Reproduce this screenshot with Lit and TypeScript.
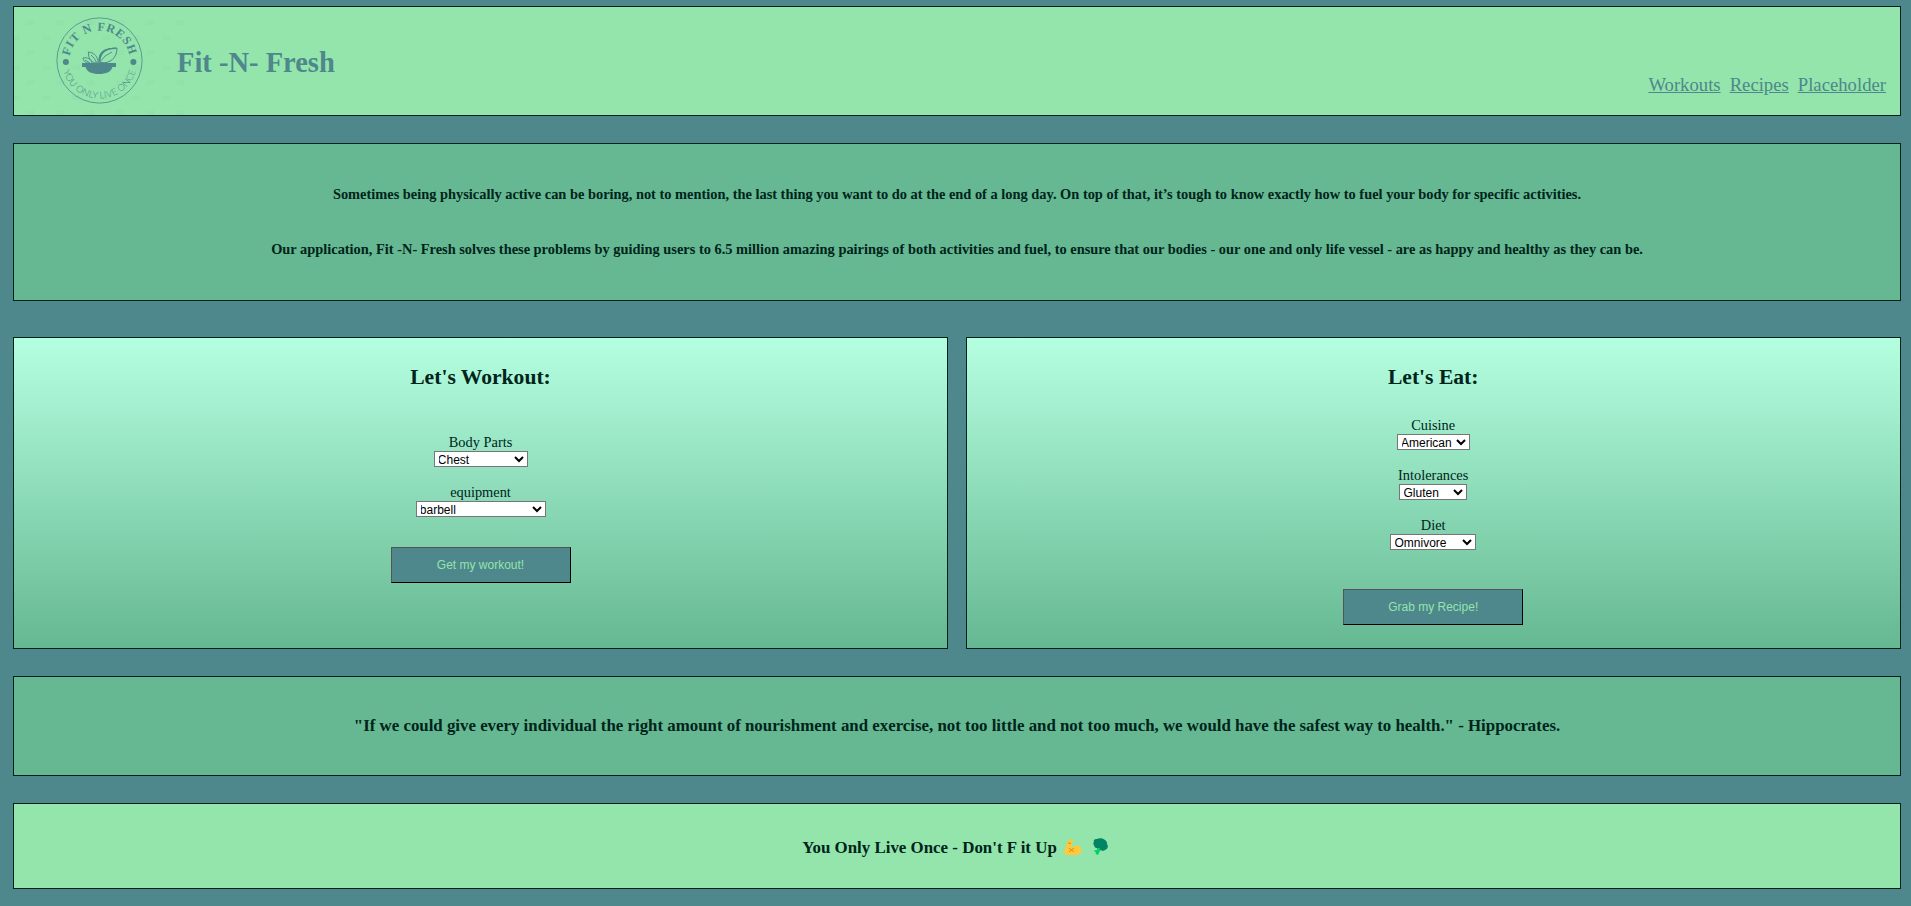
import { LitElement, html, css, svg } from "lit";
import { customElement, property } from "lit/decorators.js";

@customElement("brand-logo")
class BrandLogo extends LitElement {
  static styles = css`
    :host { display: block; width: 171px; height: 108px; }
    svg { display: block; }
    .top { font: bold 12px "Liberation Serif", serif; letter-spacing: 0.95px; }
    .bottom { font: 300 9.4px "Lato", "Open Sans", sans-serif; letter-spacing: 0.1px; }
    .mark { font: bold 7px "Liberation Sans", sans-serif; }
  `;
  render() {
    const marks = [];
    for (let r = 0; r < 7; r++) {
      for (let c = 0; c < 6; c++) {
        marks.push(svg`<text x=${(r % 2 ? -2 : 12) + c * 30} y=${18 + r * 15}>h8</text>`);
      }
    }
    return html`<svg width="171" height="108" viewBox="0 0 171 108" fill="#4e878c">
      <g class="mark" opacity="0.05">${marks}</g>
      <defs>
        <path id="arc-top" d="M55.300 53.800 A30.200 30.200 0 0 1 115.700 53.800" />
        <path id="arc-bottom" d="M47.700 53.600 A37.800 37.800 0 0 0 123.300 53.600" />
      </defs>
      <circle cx="85.5" cy="53.5" r="42.6" fill="none" stroke="#4e878c" stroke-width="0.8" />
      <text class="top"><textPath href="#arc-top" startOffset="50%" text-anchor="middle">FIT N FRESH</textPath></text>
      <text class="bottom"><textPath href="#arc-bottom" startOffset="50%" text-anchor="middle">YOU ONLY LIVE ONCE</textPath></text>
      <circle cx="51.9" cy="55" r="3" />
      <circle cx="119.4" cy="55" r="3" />
      <path d="M68 56H102V60H98.500C97 65 92 67 85 67S73 65 71.500 60H68Z" />
      <path d="M85 56C84 46 91 41 103 41C103 51 96 57 87 55.500Z" fill="none" stroke="#4e878c" stroke-width="1" />
      <path d="M85 55C83 45 91 40 103 41L101 42C92 42 87 46 86.500 54Z" />
      <path d="M86 55Q90 48 98 45M84 56C84 50 81 46 74.500 45C74 51 77 55 82 56M83 56Q80 50 77 48M78 56C77 52 74 50 69 51C69.500 54 71 56 75 56M76 56L71 53" fill="none" stroke="#4e878c" stroke-width="0.9" />
    </svg>`;
  }
}

@customElement("choice-field")
class ChoiceField extends LitElement {
  @property() label = "";
  @property() value = "";
  @property({ type: Number }) width = 90;
  static styles = css`
    :host { display: flex; flex-direction: column; align-items: center; height: 50px; }
    label { font: 14.4px/17px "Liberation Serif", serif; }
    select {
      box-sizing: border-box; height: 16px; margin: 0; padding: 0 0 1px; border: 1px solid #767676;
      border-radius: 0; background: #fff; color: #000; font: 12px "Liberation Sans", sans-serif;
      text-indent: -0.7px;
    }
  `;
  render() {
    return html`<label for="pick">${this.label}</label>
      <select id="pick" style="width:${this.width}px"><option>${this.value}</option></select>`;
  }
}

@customElement("app-root")
class AppRoot extends LitElement {
  static styles = css`
    :host {
      display: block; box-sizing: border-box; height: 906px; padding: 6px 10px 0 13px;
      background: #4e878c; color: #00241b; font-family: "Liberation Serif", serif; overflow: hidden;
    }
    header, section, footer, .card { box-sizing: border-box; border: 1px solid #00241b; }
    h1, h2, h3, p { margin: 0; }
    header { display: flex; height: 110px; background: #93e5ab; color: #4e878c; }
    h1 { font-size: 28.5px; line-height: 33px; margin: 39px 0 0 -8px; }
    nav { display: flex; gap: 9px; margin: 67px 14px 0 auto; font-size: 18.7px; line-height: 22px; }
    a { color: inherit; text-decoration: underline; }
    section { background: #65b891; text-align: center; font-weight: bold; }
    .intro { height: 158px; margin-top: 27px; padding-top: 42px; font-size: 14.405px; line-height: 17px; }
    .intro p + p { margin-top: 38px; }
    .cards { display: grid; grid-template-columns: 1fr 1fr; gap: 18px; margin: 36px 0 27px; }
    .card {
      display: flex; flex-direction: column; align-items: center; height: 312px; padding-top: 26px;
      background: linear-gradient(#b5ffe1, #65b891);
    }
    .meal { padding-right: 0.6px; }
    h2 { font-size: 21.6px; line-height: 26px; }
    .fields { margin-top: 27px; }
    .workout .fields { margin-top: 44px; }
    button {
      width: 180px; height: 36px; margin-top: 22px; padding: 0; border: 1px outset #000; border-radius: 0;
      background: #4e878c; color: #93e5ab; font: 12px "Liberation Sans", sans-serif;
    }
    .workout button { margin-top: 13px; }
    .quote { height: 100px; padding-top: 39px; font-size: 16.85px; line-height: 19px; }
    footer {
      display: flex; justify-content: center; height: 86px; margin-top: 27px; padding: 34px 3px 0 0;
      background: #93e5ab; font-size: 16.9px; line-height: 19px; font-weight: bold;
    }
    .arm { margin: 1px 0 0 7px; }
    .broccoli { margin: 0 0 0 11px; }
  `;
  render() {
    return html`
      <header>
        <brand-logo></brand-logo>
        <h1>Fit -N- Fresh</h1>
        <nav><a>Workouts</a><a>Recipes</a><a>Placeholder</a></nav>
      </header>
      <section class="intro">
        <p>Sometimes being physically active can be boring, not to mention, the last thing you want to do at the end of a long day. On top of that, it’s tough to know exactly how to fuel your body for specific activities.</p>
        <p>Our application, Fit -N- Fresh solves these problems by guiding users to 6.5 million amazing pairings of both activities and fuel, to ensure that our bodies - our one and only life vessel - are as happy and healthy as they can be.</p>
      </section>
      <div class="cards">
        <div class="card workout">
          <h2>Let's Workout:</h2>
          <div class="fields">
            <choice-field label="Body Parts" value="Chest" width="94"></choice-field>
            <choice-field label="equipment" value="barbell" width="130"></choice-field>
          </div>
          <button>Get my workout!</button>
        </div>
        <div class="card meal">
          <h2>Let's Eat:</h2>
          <div class="fields">
            <choice-field label="Cuisine" value="American" width="73"></choice-field>
            <choice-field label="Intolerances" value="Gluten" width="68"></choice-field>
            <choice-field label="Diet" value="Omnivore" width="86"></choice-field>
          </div>
          <button>Grab my Recipe!</button>
        </div>
      </div>
      <section class="quote"><p>"If we could give every individual the right amount of nourishment and exercise, not too little and not too much, we would have the safest way to health." - Hippocrates.</p></section>
      <footer>
        <span>You Only Live Once - Don't F it Up</span>
        <svg class="arm" width="18" height="17" viewBox="0 0 18 17">
          <path d="M4.500 1C6 0 8.500 0 9 2C9.500 4 8 5 7 5L8.500 8.500C11 5.500 16.500 6 17.300 10C18 13.500 16 16 12.500 16H4C1 16 0 14 0.500 11Z" fill="#ffc83d" />
          <path d="M4 4L7 4.500M5 9L10 13M10 9L5 13" fill="none" stroke="#d67d00" stroke-width="0.8" />
        </svg>
        <svg class="broccoli" width="16" height="18" viewBox="0 0 16 18">
          <path d="M4 10L8 11L7 13L5 17L2.500 16L3 14L1 13.500L2 12L4 12Z" fill="#00d26a" />
          <path d="M1 4C0 2 2 1 4 1C6-0.500 10 0 12 2C14 3 14 5 14 6C16 9 14 11 12 12C9 14 7 12 6 10C3 11 1 9 1 7C0 6 0 5 1 4Z" fill="#008463" />
        </svg>
      </footer>
    `;
  }
}
